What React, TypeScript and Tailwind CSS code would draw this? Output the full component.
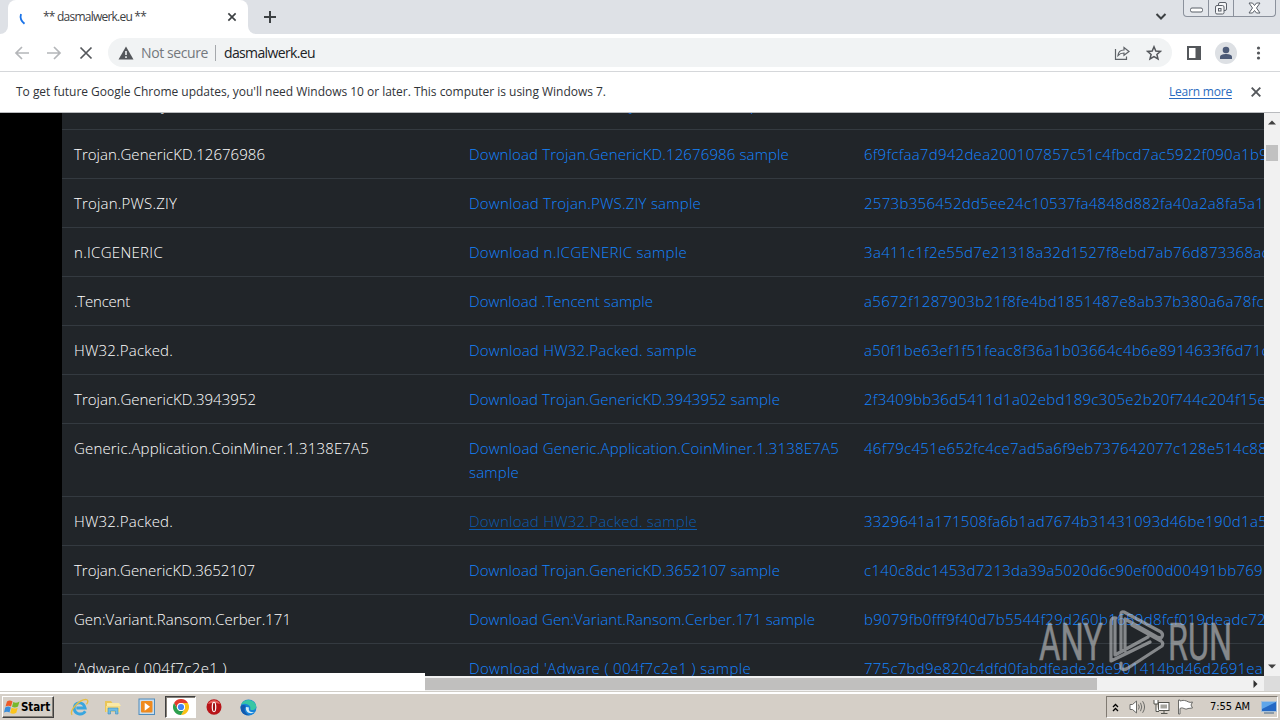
import { useLayoutEffect, useRef, useState } from "react";

/* Inline text whose letter spacing is tuned so that it spans `w` pixels. */
function Fit({ text, w, className = "" }: { text: string; w: number; className?: string }) {
  const ref = useRef<HTMLSpanElement>(null);
  const [ls, setLs] = useState(0);
  useLayoutEffect(() => {
    if (ref.current) {
      const natural = ref.current.getBoundingClientRect().width;
      setLs((w - natural) / text.length);
    }
  }, [text, w]);
  return (
    <span ref={ref} className={"inline-block whitespace-pre " + className} style={{ letterSpacing: ls }}>
      {text}
    </span>
  );
}

type Row = { name: string; nw: number; link: string; lw: number; hash: string; hw: number; extra?: string; hover?: boolean };

const rows: Row[] = [
  { name: "Trojan.GenericKD.12676986", nw: 191, link: "Download Trojan.GenericKD.12676986 sample", lw: 320, hash: "6f9fcfaa7d942dea200107857c51c4fbcd7ac5922f090a1b9", hw: 404 },
  { name: "Trojan.PWS.ZIY", nw: 103, link: "Download Trojan.PWS.ZIY sample", lw: 232, hash: "2573b356452dd5ee24c10537fa4848d882fa40a2a8fa5a1", hw: 400 },
  { name: "n.ICGENERIC", nw: 89, link: "Download n.ICGENERIC sample", lw: 218, hash: "3a411c1f2e55d7e21318a32d1527f8ebd7ab76d873368ac", hw: 405 },
  { name: ".Tencent", nw: 56, link: "Download .Tencent sample", lw: 184, hash: "a5672f1287903b21f8fe4bd1851487e8ab37b380a6a78fc", hw: 400 },
  { name: "HW32.Packed.", nw: 99, link: "Download HW32.Packed. sample", lw: 228, hash: "a50f1be63ef1f51feac8f36a1b03664c4b6e8914633f6d71c", hw: 405 },
  { name: "Trojan.GenericKD.3943952", nw: 182, link: "Download Trojan.GenericKD.3943952 sample", lw: 311, hash: "2f3409bb36d5411d1a02ebd189c305e2b20f744c204f15e", hw: 402 },
  { name: "Generic.Application.CoinMiner.1.3138E7A5", nw: 295, link: "Download Generic.Application.CoinMiner.1.3138E7A5", lw: 370, extra: "sample", hash: "46f79c451e652fc4ce7ad5a6f9eb737642077c128e514c88", hw: 403 },
  { name: "HW32.Packed.", nw: 99, link: "Download HW32.Packed. sample", lw: 228, hash: "3329641a171508fa6b1ad7674b31431093d46be190d1a5", hw: 403, hover: true },
  { name: "Trojan.GenericKD.3652107", nw: 181, link: "Download Trojan.GenericKD.3652107 sample", lw: 311, hash: "c140c8dc1453d7213da39a5020d6c90ef00d00491bb769", hw: 399 },
  { name: "Gen:Variant.Ransom.Cerber.171", nw: 217, link: "Download Gen:Variant.Ransom.Cerber.171 sample", lw: 346, hash: "b9079fb0fff9f40d7b5544f29d260b1659d8fcf019deadc72", hw: 402 },
  { name: "'Adware ( 004f7c2e1 )", nw: 153, link: "Download 'Adware ( 004f7c2e1 ) sample", lw: 282, hash: "775c7bd9e820c4dfd0fabdfeade2de901414bd46d2691ea", hw: 399 },
];

function TabStrip() {
  return (
    <div className="flex h-[34px] shrink-0 bg-[#dee1e6]">
      <div className="flex w-2 items-end bg-white">
        <div className="h-full w-full rounded-br-lg bg-[#dee1e6]" />
      </div>
      <div className="flex bg-[#dee1e6]">
        <div className="flex w-[240px] items-center rounded-t-lg bg-white pl-[10px]">
          <svg className="h-4 w-4 shrink-0" viewBox="0 0 16 16" fill="none" stroke="#1a73e8" strokeWidth="1.800">
            <path d="M3 5C1.800 9 3 12 6.500 14.800" />
          </svg>
          <Fit text="** dasmalwerk.eu **" w={103} className="ml-[9px] text-xs text-[#3c4043]" />
          <svg className="ml-auto mr-[11px] h-[10px] w-[10px]" viewBox="0 0 11 11" stroke="#3c4043" strokeWidth="1.800">
            <path d="M1.500 1.500L9.500 9.500M9.500 1.500L1.500 9.500" />
          </svg>
        </div>
      </div>
      <div className="flex w-2 bg-white">
        <div className="h-full w-full rounded-bl-lg bg-[#dee1e6]" />
      </div>
      <svg className="ml-[7px] mt-[10px] h-[14px] w-[14px]" viewBox="0 0 14 14" stroke="#3c4043" strokeWidth="2">
        <path d="M1 7H13M7 1V13" />
      </svg>
      <svg className="ml-auto mr-4 mt-[12px] h-[9px] w-[12px]" viewBox="0 0 12 9" fill="none" stroke="#3c4043" strokeWidth="2">
        <path d="M1.500 2L6 6.500L10.500 2" />
      </svg>
      <div className="mr-[4px] flex h-[17px] w-[93px] rounded-b-[4px] border border-t-0 border-[#8b919c] bg-[#e3e6eb]">
        <div className="flex w-[25px] justify-center border-r border-[#8b919c]">
          <svg className="mt-[7px] h-[6px] w-[13px]" viewBox="0 0 13 6" fill="#fff" stroke="#5b6069">
            <rect x=".5" y="1" width="12" height="4" rx="1.500" />
          </svg>
        </div>
        <div className="flex w-[25px] justify-center border-r border-[#8b919c]">
          <svg className="mt-[1px] h-[14px] w-[14px]" viewBox="0 0 14 14" fill="#f4f5f7" stroke="#5b6069">
            <rect x="4.500" y="1.500" width="8" height="8" rx="1.500" />
            <rect x="1.500" y="4.500" width="8.500" height="8.500" rx="1.500" />
            <rect x="4.500" y="7.500" width="2.500" height="2.500" />
          </svg>
        </div>
        <div className="flex flex-1 justify-center">
          <svg className="mt-[2px] h-[12px] w-[13px]" viewBox="0 0 13 12">
            <path d="M1 1H4.500L6.500 3.500L8.500 1H12L8.500 6L12 11H8.500L6.500 8.500L4.500 11H1L4.500 6Z" fill="#fff" stroke="#5b6069" />
          </svg>
        </div>
      </div>
    </div>
  );
}

function Toolbar() {
  return (
    <div className="flex h-[38px] shrink-0 items-center border-b border-[#d5d7da] bg-white pl-[14px]">
      <svg className="h-4 w-4" viewBox="0 0 16 16" fill="none" stroke="#b4b6b9" strokeWidth="1.700">
        <path d="M15 8H2M8 2L2 8L8 14" />
      </svg>
      <svg className="ml-4 h-4 w-4" viewBox="0 0 16 16" fill="none" stroke="#b4b6b9" strokeWidth="1.700">
        <path d="M1 8H14M8 2L14 8L8 14" />
      </svg>
      <svg className="ml-[17px] h-[14px] w-[14px]" viewBox="0 0 14 14" stroke="#54575b" strokeWidth="1.700">
        <path d="M1.500 1.500L12.500 12.500M12.500 1.500L1.500 12.500" />
      </svg>
      <div className="ml-[15px] flex h-[29px] w-[1064px] items-center rounded-full bg-[#f1f3f4] pl-[10px]">
        <svg className="h-[14px] w-4" viewBox="0 0 16 14">
          <path d="M8 .5L15.500 13.500H.5Z" fill="#54575b" />
          <path d="M8 5V9M8 10.200V12" stroke="#f1f3f4" strokeWidth="1.600" />
        </svg>
        <Fit text="Not secure" w={67} className="ml-[7px] text-sm text-[#74787d]" />
        <div className="ml-[7px] h-4 w-px bg-[#a5a8ac]" />
        <Fit text="dasmalwerk.eu" w={91} className="ml-[8px] text-sm text-[#202124]" />
        <svg className="ml-auto h-4 w-4" viewBox="0 0 16 16" fill="none" stroke="#5f6368" strokeWidth="1.200">
          <path d="M1.500 4V14.400H12.500V11.500" />
          <path d="M4 10.500C4.300 7 6.500 5 10 5V2.500L15 6.500L10 10.200V8C7.500 8 5.500 8.700 4 10.500Z" />
        </svg>
        <svg className="ml-4 mr-[10px] h-4 w-4" viewBox="0 0 16 16" fill="none" stroke="#54575b" strokeWidth="1.500">
          <path d="M8 1.800L9.800 6.100L14.400 6.400L10.900 9.400L12 13.900L8 11.500L4 13.900L5.100 9.400L1.600 6.400L6.200 6.100Z" />
        </svg>
      </div>
      <svg className="ml-[15px] h-[14px] w-[14px]" viewBox="0 0 14 14">
        <rect x="1" y="1" width="12" height="12" fill="none" stroke="#54575b" strokeWidth="2" />
        <rect x="8.500" y="1" width="4.500" height="12" fill="#54575b" />
      </svg>
      <svg className="ml-[14px] h-[22px] w-[22px]" viewBox="0 0 22 22">
        <circle cx="11" cy="11" r="11" fill="#dde0e4" />
        <circle cx="11" cy="8" r="3.300" fill="#4d5b78" />
        <path d="M5 17V15C5 12.800 8.500 12 11 12S17 12.800 17 15V17Z" fill="#4d5b78" />
      </svg>
      <svg className="ml-[13px] h-4 w-4" viewBox="0 0 16 16" fill="#54575b">
        <circle cx="8.500" cy="3" r="1.600" />
        <circle cx="8.500" cy="8" r="1.600" />
        <circle cx="8.500" cy="13" r="1.600" />
      </svg>
    </div>
  );
}

function InfoBar() {
  return (
    <div className="flex h-[41px] shrink-0 items-center border-b border-[#b9bbbe] bg-white pl-4 pr-[19px] text-xs">
      <Fit
        text="To get future Google Chrome updates, you'll need Windows 10 or later. This computer is using Windows 7."
        w={590}
        className="text-[#303338]"
      />
      <Fit text="Learn more" w={63} className="ml-auto text-[#2a6bc0] underline underline-offset-2" />
      <svg className="ml-[19px] h-[10px] w-[10px]" viewBox="0 0 10 10" stroke="#54575b" strokeWidth="1.900">
        <path d="M.7 .7L9.300 9.300M9.300 .7L.7 9.300" />
      </svg>
    </div>
  );
}

function Table() {
  return (
    <div className="flex min-w-0 flex-1 flex-col overflow-hidden bg-[#212529] text-[15px] leading-6 font-light">
      <div className="-mt-[33px] flex h-[49px] shrink-0 pt-[13px] pl-[12px] text-white">
        <span className="ml-[87px] w-[468px]">y</span>
        <span className="w-[121px] text-[#007bff]">y</span>
        <span className="text-[#007bff]">p</span>
      </div>
      {rows.map((r, i) => (
        <div key={i} className="grid shrink-0 grid-cols-[395px_395px_395px] border-t border-[#343a40] py-3">
          <div className="pl-3 text-white">
            <Fit text={r.name} w={r.nw} />
          </div>
          <div className={r.hover ? "pl-3 text-[#0b5cb0]" : "pl-3 text-[#1484ff]"}>
            <Fit text={r.link} w={r.lw} className={r.hover ? "underline underline-offset-2" : ""} />
            {r.extra && (
              <div>
                <Fit text={r.extra} w={50} />
              </div>
            )}
          </div>
          <div className="pl-3 text-[#1484ff]">
            <Fit text={r.hash} w={r.hw} />
          </div>
        </div>
      ))}
    </div>
  );
}

function Watermark() {
  return (
    <svg className="absolute left-[1030px] top-[600px] h-[80px] w-[210px]" viewBox="1030 600 210 80" opacity="0.62">
      <g fill="#c3c5c7" stroke="#c3c5c7" strokeWidth=".5" fontFamily="Roboto, sans-serif" fontSize="52">
        <text x="1039" y="659.500" textLength="64" lengthAdjust="spacingAndGlyphs">ANY</text>
        <text x="1168" y="659.500" textLength="64" lengthAdjust="spacingAndGlyphs">RUN</text>
      </g>
      <path
        fill="none"
        stroke="#c3c5c7"
        strokeWidth="3.200"
        strokeLinejoin="round"
        strokeLinecap="round"
        d="M1121 652V614Q1121 611 1124 612L1161 632Q1164 635 1161 638L1157 637L1125 619V651M1116 618Q1111 617 1111 622V661L1150 642M1115 618V655L1148 637M1121 663V668Q1124 671 1128 668L1162 646Q1164 643 1161 641L1132 625"
      />
    </svg>
  );
}

function Taskbar() {
  return (
    <div className="flex h-[28px] shrink-0 items-center border-t-2 border-t-white bg-[#d5cfc7]">
      <div className="ml-[2px] flex h-[22px] w-[52px] items-center border border-b-[#404040] border-l-white border-r-[#404040] border-t-white pl-[1px] shadow-[inset_-1px_-1px_0_#858078]">
        <svg className="h-[16px] w-[16px]" viewBox="0 0 16 16">
          <path d="M3 2.500C5 1 7 1.500 8.500 2.500L7 7.500C5 6.300 3.500 6.500 1.500 7.500Z" fill="#ed5b28" />
          <path d="M9.300 3C11 4 13 4 15.500 2.500L14 7.500C12 8.700 10 8.700 8 7.800Z" fill="#77b82c" />
          <path d="M1.200 8.500C3.500 7.300 5 7.300 6.800 8.500L5.500 13.500C4 12.500 2 12.500 0 13.500Z" fill="#3a8edb" />
          <path d="M7.600 8.800C9.500 10 11.500 9.800 13.700 8.700L12.300 13.700C10.500 15 8 15 6.200 14Z" fill="#fbc41c" />
        </svg>
        <Fit text="Start" w={29} className="ml-px pt-px [font-family:'DejaVu_Sans_Condensed','DejaVu_Sans',sans-serif] text-[11.5px] font-bold text-black" />
      </div>
      <svg className="ml-[16px] h-[19px] w-[19px]" viewBox="0 0 18 18" fill="none">
        <path d="M14.500 12.500C11.500 17 4 15.500 4 9.500S12.500 2.500 14.300 9.500H6" stroke="#39a6df" strokeWidth="2.700" />
        <path d="M2 16C-1 12 9 1 15.500 1.500C18 2 16.500 5 15.500 6" stroke="#e5bd43" strokeWidth="1.300" />
      </svg>
      <svg className="ml-[15px] h-[18px] w-[18px]" viewBox="0 0 18 18">
        <path d="M1 3H7L8.500 5H15V14H1Z" fill="#e9c558" />
        <path d="M3 5H15L17 8H3Z" fill="#fbe9a5" />
        <path d="M2 8H16V14H2Z" fill="#f5dc83" />
        <path d="M4 10H14V16H11.500V13H6.500V16H4Z" fill="#70bce4" stroke="#3d8fbe" strokeWidth=".6" />
      </svg>
      <svg className="ml-[16px] h-[18px] w-[18px]" viewBox="0 0 18 18">
        <rect x="1" y="1" width="15.500" height="15.500" fill="#c9ddec" stroke="#4e8cbd" />
        <rect x="3" y="3" width="11.500" height="11.500" rx="1" fill="#ef8a1d" />
        <path d="M6.700 4.800L12 8.800L6.700 12.800Z" fill="#fff" />
      </svg>
      <div className="ml-[9px] flex h-[22px] w-[31px] items-center justify-center border border-b-white border-l-[#404040] border-r-white border-t-[#404040] bg-white shadow-[inset_1px_1px_0_#858078]">
        <svg className="h-4 w-4" viewBox="0 0 16 16">
          <path d="M1.070 4A8 8 0 0 1 14.930 4H8A4 4 0 0 0 4.540 10Z" fill="#e33b2e" />
          <path d="M14.930 4A8 8 0 0 1 8 16L11.460 10A4 4 0 0 0 8 4Z" fill="#fbc116" />
          <path d="M1.070 4A8 8 0 0 0 8 16L11.460 10A4 4 0 0 1 4.540 10Z" fill="#2da04e" />
          <circle cx="8" cy="8" r="4" fill="#fff" />
          <circle cx="8" cy="8" r="3.100" fill="#4285f4" />
        </svg>
      </div>
      <svg className="ml-[10px] h-4 w-4" viewBox="0 0 16 16">
        <ellipse cx="8" cy="8" rx="7.500" ry="7.700" fill="#b81419" />
        <path d="M2 5C4 0 12 0 14 5C11 3.500 5 3.500 2 5Z" fill="#e7605c" />
        <ellipse cx="8" cy="8" rx="2.300" ry="5.200" fill="#fff" />
        <ellipse cx="8" cy="8" rx="1.100" ry="4.300" fill="#9d1115" />
      </svg>
      <svg className="ml-[18px] h-[17px] w-[17px]" viewBox="0 0 17 17">
        <circle cx="8.500" cy="8.500" r="8" fill="#1683d8" />
        <path d="M1 6C3 0 13-1 16 6C17 10 14 11.500 11 11C9.500 10.500 11 9 10 7.500C8 4.500 3.500 4 1 6Z" fill="#37c6a4" />
        <path d="M6 8C5 13 10 16 14.500 13C10 14 8 11.500 9 8.500Z" fill="#d5ebf6" />
        <path d="M6 7C3 10 5 15 10 16.300C3 17 0 12 .7 7C2.500 5.500 4.500 5.500 6 7Z" fill="#1459ad" />
      </svg>
      <div className="ml-auto mr-[2px] flex h-[22px] w-[172px] items-center border border-b-white border-l-[#807a72] border-r-white border-t-[#807a72]">
        <svg className="ml-[5px] h-[9px] w-[7px]" viewBox="0 0 7 9" fill="none" stroke="#000" strokeWidth="1.300">
          <path d="M1 4L3.500 1.500L6 4M1 8L3.500 5.500L6 8" />
        </svg>
        <svg className="ml-[10px] h-[16px] w-[17px]" viewBox="0 0 17 16" fill="none" stroke="#6b6b68">
          <path d="M1 5.500H3.500L7.500 2V14L3.500 10.500H1Z" fill="#fff" />
          <path d="M9.500 5.500Q11 8 9.500 10.500M11.500 3.800Q14 8 11.500 12.200M13.600 2.200Q17.500 8 13.600 13.800" />
        </svg>
        <svg className="ml-[7px] h-[16px] w-[17px]" viewBox="0 0 17 16" stroke="#55554f">
          <rect x="5.500" y="3.500" width="10.500" height="8" fill="#fff" />
          <rect x="7.500" y="5.500" width="6.500" height="4" fill="#a5a49e" stroke="none" />
          <path d="M8 14.500H14.500M11 12V14" />
          <path d="M1 1V5H5V1M3 5V12.500H6" fill="#fff" />
        </svg>
        <svg className="ml-[7px] h-[16px] w-[17px]" viewBox="0 0 17 16" fill="#fff" stroke="#6b6b68">
          <path d="M1.500 1V15H3V9.500C6 7.500 8 11.500 11 9.500L15.500 9L14 6L15.500 3C12 4.500 10 1.500 7.500 1.500C5.500 1 4 2 3 2V1Z" />
        </svg>
        <Fit text="7:55 AM" w={40} className="ml-auto pt-px [font-family:'DejaVu_Sans_Condensed','DejaVu_Sans',sans-serif] text-[11px] text-black" />
        <svg className="ml-[11px] h-[14px] w-[16px] shrink-0" viewBox="0 0 16 14">
          <rect x=".5" y="1.500" width="15" height="10" fill="#2468c4" stroke="#a5bfd8" />
          <path d="M1 2H15L1 9Z" fill="#5fa6ea" />
          <path d="M3 13H13" stroke="#5b7894" strokeWidth="1.200" />
        </svg>
      </div>
    </div>
  );
}

export default function App() {
  return (
    <div className="relative flex h-[720px] w-[1280px] flex-col overflow-hidden bg-white [font-family:'Open_Sans','Noto_Sans',sans-serif]">
      <TabStrip />
      <Toolbar />
      <InfoBar />
      <div className="flex h-[563px] shrink-0 overflow-hidden">
        <div className="w-[62px] shrink-0 bg-black" />
        <Table />
        <div className="flex w-4 shrink-0 flex-col items-center bg-[#f1f1f1]">
          <svg className="mt-[7px] h-[5px] w-[8px]" viewBox="0 0 8 5" fill="#404040">
            <path d="M0 4.500L4 .5L8 4.500Z" />
          </svg>
          <div className="mt-[20px] h-4 w-3 bg-[#c1c1c1]" />
          <svg className="mb-[7px] mt-auto h-[5px] w-[8px]" viewBox="0 0 8 5" fill="#404040">
            <path d="M0 .5L4 4.500L8 .5Z" />
          </svg>
        </div>
      </div>
      <div className="flex h-4 shrink-0 border-b border-[#d0cdc7] bg-[#f1f1f1]">
        <div className="-mt-[3px] h-[18px] w-[425px] bg-white" />
        <div className="mt-[2px] h-[12px] w-[672px] bg-[#c0bfbe]" />
        <svg className="ml-auto mr-[6px] mt-[4px] h-[8px] w-[5px]" viewBox="0 0 5 8" fill="#303030">
          <path d="M.5 0L4.500 4L.5 8Z" />
        </svg>
        <div className="h-full w-4 bg-[#dcdcdc]" />
      </div>
      <Taskbar />
      <Watermark />
    </div>
  );
}
